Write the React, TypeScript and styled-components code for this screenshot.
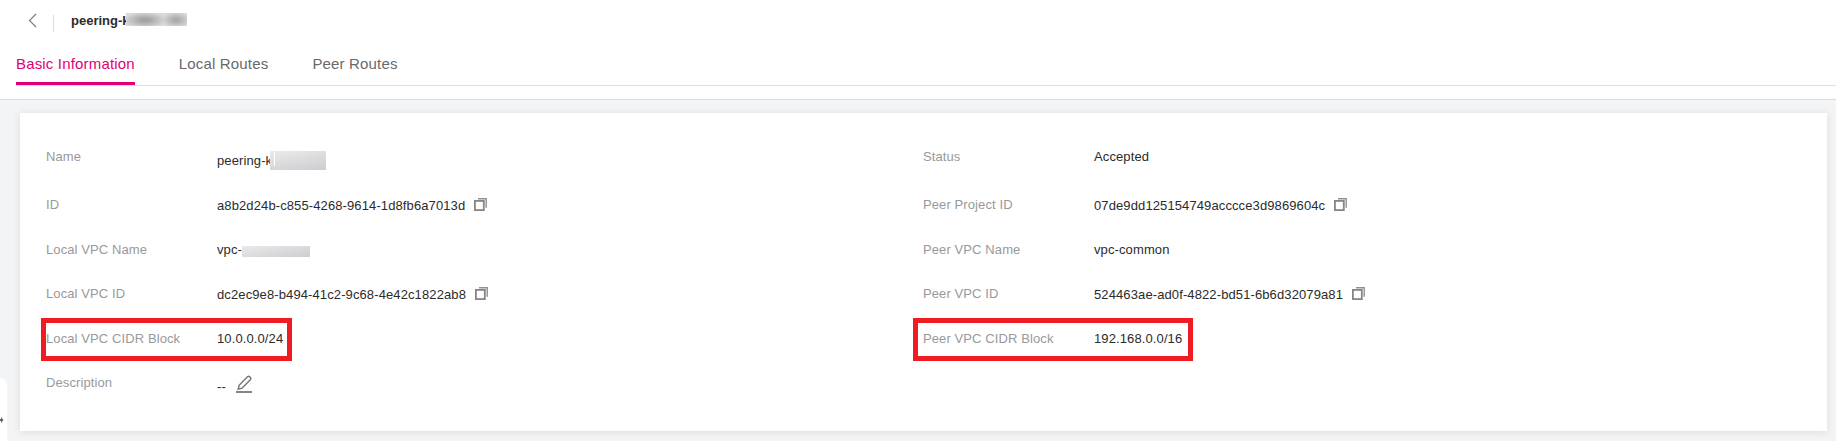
import React from "react";
import styled, { createGlobalStyle } from "styled-components";

const GlobalStyle = createGlobalStyle`
  * { box-sizing: border-box; }
  body {
    margin: 0;
    background: #f3f4f6;
    font-family: "Liberation Sans", Arial, sans-serif;
    font-size: 13px;
    overflow: hidden;
  }
`;

const Page = styled.div`
  position: relative;
  height: 441px;
  background: #f3f4f6;
  overflow: hidden;
`;

const Header = styled.header`
  height: 100px;
  background: #fff;
  border-bottom: 1px solid #d9dadb;
`;

const TitleBar = styled.div`
  display: flex;
  height: 42px;
  padding: 13px 0 0 28px;
`;

const BackIcon = styled.svg`
  display: block;
  width: 9px;
  height: 15px;
`;

const Divider = styled.span`
  width: 1px;
  height: 17px;
  margin: 2px 17px 0 16px;
  background: #dcdde0;
`;

const Title = styled.h1`
  display: flex;
  margin: 0;
  font-size: 13px;
  line-height: 15px;
  color: #2b2b2b;
`;

const TitleMask = styled.span`
  width: 61px;
  height: 13px;
  margin-left: -4px;
  background:
    radial-gradient(ellipse 21px 8px at 19px 7px, #a4a4a4 20%, transparent 100%),
    radial-gradient(ellipse 14px 8px at 50px 7px, #acacac 20%, transparent 100%),
    #d9d9d9;
`;

const Tabs = styled.nav`
  display: flex;
  gap: 44px;
  height: 44px;
  margin-left: 16px;
  border-bottom: 1px solid #dfdfe1;
`;

const Tab = styled.a<{ $active?: boolean }>`
  height: 43px;
  padding-top: 13px;
  font-size: 15px;
  line-height: 18px;
  letter-spacing: 0.17px;
  color: ${(p) => (p.$active ? "#e20074" : "#696969")};
  border-bottom: ${(p) => (p.$active ? "3px solid #e20074" : "0")};
`;

const Card = styled.main`
  display: grid;
  grid-template-columns: 877px 1fr;
  height: 318px;
  margin: 13px 9px 0 20px;
  padding: 34px 0 0 26px;
  background: #fff;
  box-shadow: 0 1px 8px rgba(50, 55, 60, 0.12);
`;

const Column = styled.dl`
  margin: 0;
`;

const Row = styled.div<{ $height: number }>`
  position: relative;
  display: flex;
  height: ${(p) => p.$height}px;
  line-height: 20px;
  white-space: nowrap;
`;

const Label = styled.dt`
  width: 171px;
  letter-spacing: 0.1px;
  color: #999;
`;

const Value = styled.dd<{ $offset: number }>`
  display: flex;
  margin: 0;
  padding-top: ${(p) => p.$offset}px;
  letter-spacing: 0.11px;
  color: #2b2b2b;
`;

const Highlight = styled.span<{ $width: number; $left: number }>`
  position: absolute;
  top: -11px;
  left: ${(p) => p.$left}px;
  width: ${(p) => p.$width}px;
  height: 43px;
  border: 5px solid #ef1c24;
`;

const Mask = styled.span<{ $width: number; $height: number; $top: number; $left: number; $line?: boolean }>`
  width: ${(p) => p.$width}px;
  height: ${(p) => p.$height}px;
  margin: ${(p) => p.$top}px 0 0 ${(p) => p.$left}px;
  background:
    ${(p) => (p.$line ? "linear-gradient(#fff, #fff) 4px 1px / 1px 14px no-repeat," : "")}
    linear-gradient(170deg, #e9eaeb, #cbcdd0);
`;

const Glyph = styled.svg<{ $top: number; $left: number }>`
  display: block;
  margin: ${(p) => p.$top}px 0 0 ${(p) => p.$left}px;
`;

const SideHandle = styled.aside`
  position: absolute;
  left: 0;
  top: 378px;
  width: 7px;
  height: 80px;
  padding-top: 39px;
  border-top-right-radius: 8px;
  background: #fff;
`;

const HandleArrow = styled.svg`
  display: block;
`;

const CopyIcon = () => (
  <Glyph $top={2} $left={9} width="13" height="13" viewBox="0 0 13 13" fill="none">
    <path d="M4 0.7H12.2V9.8" stroke="#8f8f8f" strokeWidth="1.4" />
    <rect x="0.9" y="2.9" width="8.9" height="9.2" stroke="#858585" strokeWidth="1.8" />
  </Glyph>
);

const EditIcon = () => (
  <Glyph $top={-2} $left={10} width="17" height="18" viewBox="0 0 17 18" fill="none">
    <path
      d="M2.2 14.2L3.1 10.3L11.5 1.8Q12.6 .8 13.8 1.9L14.3 2.4Q15.3 3.5 14.3 4.7L6 13.2Z"
      stroke="#777"
      strokeWidth="1.5"
    />
    <path d="M0 17H16" stroke="#858585" strokeWidth="2" />
  </Glyph>
);

type Item = {
  label: string;
  value: string;
  height: number;
  offset?: number;
  extra?: React.ReactNode;
  highlight?: { left: number; width: number };
};

const local: Item[] = [
  { label: "Name", value: "peering-k", height: 48, offset: 4, extra: <Mask $width={56} $height={19} $top={0} $left={-2} $line /> },
  { label: "ID", value: "a8b2d24b-c855-4268-9614-1d8fb6a7013d", height: 45, offset: 1, extra: <CopyIcon /> },
  { label: "Local VPC Name", value: "vpc-", height: 44, extra: <Mask $width={68} $height={11} $top={6} $left={0} /> },
  { label: "Local VPC ID", value: "dc2ec9e8-b494-41c2-9c68-4e42c1822ab8", height: 45, offset: 1, extra: <CopyIcon /> },
  { label: "Local VPC CIDR Block", value: "10.0.0.0/24", height: 44, highlight: { left: -5, width: 251 } },
  { label: "Description", value: "--", height: 44, offset: 4, extra: <EditIcon /> },
];

const peer: Item[] = [
  { label: "Status", value: "Accepted", height: 48 },
  { label: "Peer Project ID", value: "07de9dd125154749acccce3d9869604c", height: 45, offset: 1, extra: <CopyIcon /> },
  { label: "Peer VPC Name", value: "vpc-common", height: 44 },
  { label: "Peer VPC ID", value: "524463ae-ad0f-4822-bd51-6b6d32079a81", height: 45, offset: 1, extra: <CopyIcon /> },
  { label: "Peer VPC CIDR Block", value: "192.168.0.0/16", height: 44, highlight: { left: -10, width: 280 } },
];

const Details = ({ items }: { items: Item[] }) => (
  <Column>
    {items.map((item) => (
      <Row key={item.label} $height={item.height}>
        <Label>{item.label}</Label>
        <Value $offset={item.offset ?? 0}>
          {item.value}
          {item.extra}
        </Value>
        {item.highlight && <Highlight $left={item.highlight.left} $width={item.highlight.width} />}
      </Row>
    ))}
  </Column>
);

export default function App() {
  return (
    <>
      <GlobalStyle />
      <Page>
        <Header>
          <TitleBar>
            <BackIcon viewBox="0 0 9 15" fill="none">
              <path d="M8 1L1.5 7.5L8 14" stroke="#777" strokeWidth="1.1" />
            </BackIcon>
            <Divider />
            <Title>
              peering-k
              <TitleMask />
            </Title>
          </TitleBar>
          <Tabs>
            <Tab $active>Basic Information</Tab>
            <Tab>Local Routes</Tab>
            <Tab>Peer Routes</Tab>
          </Tabs>
        </Header>
        <Card>
          <Details items={local} />
          <Details items={peer} />
        </Card>
        <SideHandle>
          <HandleArrow width="4" height="6" viewBox="0 0 4 6">
            <path d="M0 2H1V0L3.5 3L1 6V4H0Z" fill="#666" />
          </HandleArrow>
        </SideHandle>
      </Page>
    </>
  );
}
